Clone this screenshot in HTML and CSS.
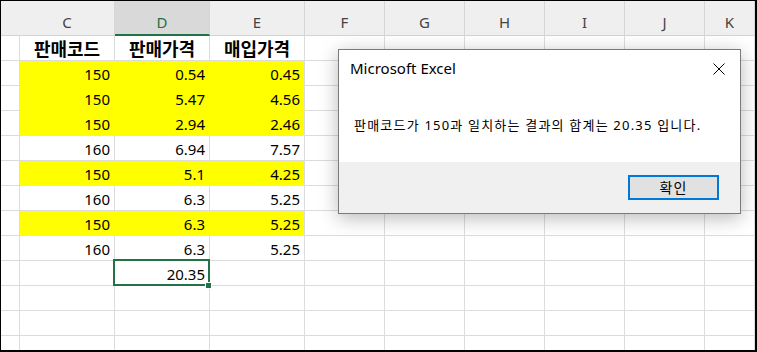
FILE: index.html
```html
<!DOCTYPE html>
<html lang="ko">
<head>
    <meta charset="UTF-8">
    <meta name="viewport" content="width=device-width, initial-scale=1.0">
    <title>Microsoft Excel</title>
    <link rel="stylesheet" href="styles.css">
</head>
<body>
    <div class="frame">
        <div class="sheet">
            <!-- column headers -->
            <div class="col-head corner"></div>
            <div class="col-head">C</div>
            <div class="col-head active">D</div>
            <div class="col-head">E</div>
            <div class="col-head">F</div>
            <div class="col-head">G</div>
            <div class="col-head">H</div>
            <div class="col-head">I</div>
            <div class="col-head">J</div>
            <div class="col-head">K</div>

            <!-- row 1: labels -->
            <div class="row-num"></div>
            <div class="cell label">판매코드</div>
            <div class="cell label">판매가격</div>
            <div class="cell label">매입가격</div>
            <div class="cell"></div><div class="cell"></div><div class="cell"></div><div class="cell"></div><div class="cell"></div><div class="cell"></div>

            <div class="row-num"></div>
            <div class="cell num hl">150</div>
            <div class="cell num hl">0.54</div>
            <div class="cell num hl last">0.45</div>
            <div class="cell"></div><div class="cell"></div><div class="cell"></div><div class="cell"></div><div class="cell"></div><div class="cell"></div>

            <div class="row-num"></div>
            <div class="cell num hl">150</div>
            <div class="cell num hl">5.47</div>
            <div class="cell num hl last">4.56</div>
            <div class="cell"></div><div class="cell"></div><div class="cell"></div><div class="cell"></div><div class="cell"></div><div class="cell"></div>

            <div class="row-num"></div>
            <div class="cell num hl">150</div>
            <div class="cell num hl">2.94</div>
            <div class="cell num hl last">2.46</div>
            <div class="cell"></div><div class="cell"></div><div class="cell"></div><div class="cell"></div><div class="cell"></div><div class="cell"></div>

            <div class="row-num"></div>
            <div class="cell num">160</div>
            <div class="cell num">6.94</div>
            <div class="cell num">7.57</div>
            <div class="cell"></div><div class="cell"></div><div class="cell"></div><div class="cell"></div><div class="cell"></div><div class="cell"></div>

            <div class="row-num"></div>
            <div class="cell num hl">150</div>
            <div class="cell num hl">5.1</div>
            <div class="cell num hl last">4.25</div>
            <div class="cell"></div><div class="cell"></div><div class="cell"></div><div class="cell"></div><div class="cell"></div><div class="cell"></div>

            <div class="row-num"></div>
            <div class="cell num">160</div>
            <div class="cell num">6.3</div>
            <div class="cell num">5.25</div>
            <div class="cell"></div><div class="cell"></div><div class="cell"></div><div class="cell"></div><div class="cell"></div><div class="cell"></div>

            <div class="row-num"></div>
            <div class="cell num hl">150</div>
            <div class="cell num hl">6.3</div>
            <div class="cell num hl last">5.25</div>
            <div class="cell"></div><div class="cell"></div><div class="cell"></div><div class="cell"></div><div class="cell"></div><div class="cell"></div>

            <div class="row-num"></div>
            <div class="cell num">160</div>
            <div class="cell num">6.3</div>
            <div class="cell num">5.25</div>
            <div class="cell"></div><div class="cell"></div><div class="cell"></div><div class="cell"></div><div class="cell"></div><div class="cell"></div>

            <div class="row-num"></div>
            <div class="cell"></div>
            <div class="cell num selected">20.35<span class="fill-handle"></span></div>
            <div class="cell"></div>
            <div class="cell"></div><div class="cell"></div><div class="cell"></div><div class="cell"></div><div class="cell"></div><div class="cell"></div>

            <div class="row-num"></div>
            <div class="cell"></div><div class="cell"></div><div class="cell"></div>
            <div class="cell"></div><div class="cell"></div><div class="cell"></div><div class="cell"></div><div class="cell"></div><div class="cell"></div>

            <div class="row-num"></div>
            <div class="cell"></div><div class="cell"></div><div class="cell"></div>
            <div class="cell"></div><div class="cell"></div><div class="cell"></div><div class="cell"></div><div class="cell"></div><div class="cell"></div>

            <div class="row-num"></div>
            <div class="cell"></div><div class="cell"></div><div class="cell"></div>
            <div class="cell"></div><div class="cell"></div><div class="cell"></div><div class="cell"></div><div class="cell"></div><div class="cell"></div>
        </div>

        <div class="dialog">
            <div class="dialog-head">
                <span class="dialog-title">Microsoft Excel</span>
                <svg class="dialog-close" width="12" height="12" viewBox="0 0 12 12">
                    <path d="M0.5 0.5 L11.5 11.5 M11.5 0.5 L0.5 11.5" stroke="#000" stroke-width="1" fill="none"/>
                </svg>
            </div>
            <p class="dialog-msg">판매코드가 150과 일치하는 결과의 합계는 20.35 입니다.</p>
            <div class="dialog-foot">
                <button class="dialog-btn">확인</button>
            </div>
        </div>
    </div>
</body>
</html>
```
FILE: styles.css
```css
body {
    margin: 0;
    padding: 0;
    background-color: white;
    font-family: "Noto Sans", "Noto Sans CJK KR", sans-serif;
}

.frame {
    position: relative;
    width: 757px;
    height: 352px;
    box-sizing: border-box;
    border-style: solid;
    border-color: #000;
    border-width: 1px 2px 2px 1px;
    overflow: hidden;
    background-color: white;
}

.sheet {
    display: grid;
    grid-template-columns: 19px repeat(3, 95px) repeat(5, 80px) 1fr;
    grid-template-rows: 35px;
    grid-auto-rows: 25px;
}

.sheet > div {
    box-sizing: border-box;
}

.col-head {
    background-color: #efefef;
    border-right: 1px solid #d6d6d6;
    border-bottom: 1px solid #d4d4d4;
    color: #444;
    font-size: 15px;
    display: flex;
    align-items: flex-end;
    justify-content: center;
    padding-bottom: 3px;
    line-height: 20px;
}

.col-head.corner {
    border-right-color: #efefef;
}

.col-head.active {
    background-color: #d9d9d9;
    border-bottom: 2px solid #217346;
    padding-bottom: 2px;
    color: #217346;
}

.row-num {
    border-right: 1px solid #dcdcdc;
    border-bottom: 1px solid #dcdcdc;
}

.cell {
    position: relative;
    border-right: 1px solid #dcdcdc;
    border-bottom: 1px solid #dcdcdc;
    font-size: 15px;
    color: #000;
    display: flex;
    align-items: flex-end;
    line-height: 20px;
}

.cell.label {
    justify-content: center;
    align-items: center;
    font-family: "Noto Sans CJK KR", sans-serif;
    font-weight: bold;
    font-size: 18px;
}

.cell.num {
    justify-content: flex-end;
    padding-right: 4px;
    padding-bottom: 1px;
}

.cell.hl {
    background-color: #ffff00;
    border-right-color: #ffff00;
    border-bottom-color: #ffff00;
}

.cell.hl.last {
    border-right-color: #dcdcdc;
}

.cell.selected::after {
    content: "";
    position: absolute;
    left: -2px;
    top: -2px;
    right: -1px;
    bottom: -1px;
    border: 2px solid #217346;
}

.fill-handle {
    position: absolute;
    right: -3px;
    bottom: -4px;
    width: 5px;
    height: 5px;
    background-color: #217346;
    border: 1px solid white;
    z-index: 1;
}

.dialog {
    position: absolute;
    left: 337px;
    top: 48px;
    width: 403px;
    height: 165px;
    box-sizing: border-box;
    border: 1px solid #7a7a7a;
    background-color: white;
    box-shadow: 0 4px 18px rgba(0, 0, 0, 0.28);
    display: flex;
    flex-direction: column;
}

.dialog-head {
    display: flex;
    justify-content: space-between;
    align-items: flex-start;
    height: 40px;
    box-sizing: border-box;
    padding: 8px 15px 0 11px;
}

.dialog-title {
    font-size: 15px;
    line-height: 20px;
    color: #000;
}

.dialog-close {
    margin-top: 5px;
}

.dialog-msg {
    margin: 26px 0 0;
    padding-left: 15px;
    font-size: 13px;
    letter-spacing: 1.2px;
    line-height: 18px;
    color: #000;
}

.dialog-foot {
    margin-top: auto;
    height: 51px;
    background-color: #f0f0f0;
    display: flex;
    align-items: center;
    justify-content: flex-end;
    padding-right: 21px;
}

.dialog-btn {
    width: 91px;
    height: 25px;
    box-sizing: border-box;
    border: 2px solid #0078d7;
    background-color: #e1e1e1;
    font-family: "Noto Sans CJK KR", sans-serif;
    font-size: 14px;
    letter-spacing: 1px;
    line-height: 19px;
    padding: 0;
    color: #000;
}
```
